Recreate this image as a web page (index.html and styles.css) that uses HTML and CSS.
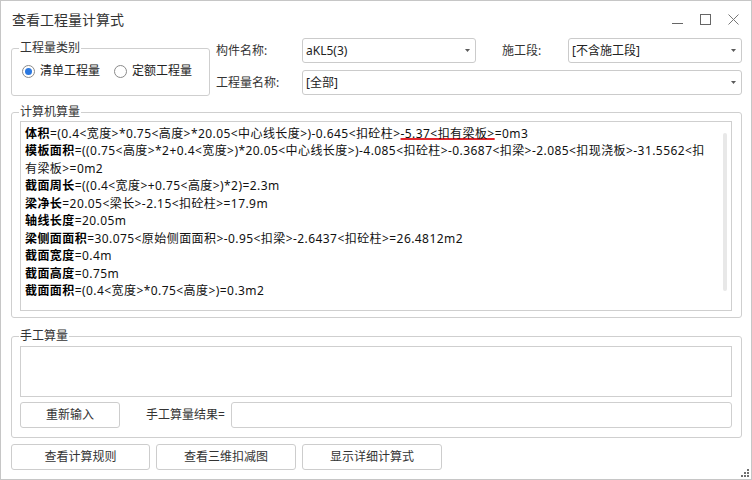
FILE: index.html
```html
<!DOCTYPE html>
<html lang="zh-CN">
<head>
<meta charset="utf-8">
<title>查看工程量计算式</title>
<link rel="stylesheet" href="styles.css">
</head>
<body>
<div class="window">
  <div class="titlebar">
    <span class="title">查看工程量计算式</span>
    <div class="controls">
      <svg viewBox="0 0 11 11"><line x1="0" y1="9.5" x2="11" y2="9.5" stroke="#666" stroke-width="1"/></svg>
      <svg viewBox="0 0 11 11"><rect x="0.5" y="0.5" width="10" height="10" fill="none" stroke="#666" stroke-width="1"/></svg>
      <svg viewBox="0 0 11 11"><path d="M0.5 0.5 L10.5 10.5 M10.5 0.5 L0.5 10.5" stroke="#777" stroke-width="1" fill="none"/></svg>
    </div>
  </div>
  <div class="content">
    <div class="top">
      <fieldset class="group type-group">
        <legend>工程量类别</legend>
        <div class="radios">
          <span class="radio-item"><span class="radio checked"><span class="dot"></span></span>清单工程量</span>
          <span class="radio-item second"><span class="radio"></span>定额工程量</span>
        </div>
      </fieldset>
      <div class="props">
        <span class="lbl">构件名称:</span>
        <div class="combo"><span>aKL5(3)</span><svg class="arrow" viewBox="0 0 5 3"><polygon points="0,0 5,0 2.5,3" fill="#5a5a5a"/></svg></div>
        <span class="lbl lbl-stage">施工段:</span>
        <div class="combo"><span>[不含施工段]</span><svg class="arrow" viewBox="0 0 5 3"><polygon points="0,0 5,0 2.5,3" fill="#5a5a5a"/></svg></div>
        <span class="lbl">工程量名称:</span>
        <div class="combo combo-wide"><span>[全部]</span><svg class="arrow" viewBox="0 0 5 3"><polygon points="0,0 5,0 2.5,3" fill="#5a5a5a"/></svg></div>
      </div>
    </div>

    <fieldset class="group calc-group">
      <legend>计算机算量</legend>
      <div class="calc-body">
        <div class="calc-box">
          <div class="calc-text">
            <p><b>体积</b>=(0.4&lt;宽度&gt;*0.75&lt;高度&gt;*20.05&lt;中心线长度&gt;)-0.645&lt;扣砼柱&gt;<span class="spell">-5.37&lt;扣有梁板&gt;</span>=0m3</p>
            <p><b>模板面积</b>=((0.75&lt;高度&gt;*2+0.4&lt;宽度&gt;)*20.05&lt;中心线长度&gt;)-4.085&lt;扣砼柱&gt;-0.3687&lt;扣梁&gt;-2.085&lt;扣现浇板&gt;-31.5562&lt;扣有梁板&gt;=0m2</p>
            <p><b>截面周长</b>=((0.4&lt;宽度&gt;+0.75&lt;高度&gt;)*2)=2.3m</p>
            <p><b>梁净长</b>=20.05&lt;梁长&gt;-2.15&lt;扣砼柱&gt;=17.9m</p>
            <p><b>轴线长度</b>=20.05m</p>
            <p><b>梁侧面面积</b>=30.075&lt;原始侧面面积&gt;-0.95&lt;扣梁&gt;-2.6437&lt;扣砼柱&gt;=26.4812m2</p>
            <p><b>截面宽度</b>=0.4m</p>
            <p><b>截面高度</b>=0.75m</p>
            <p><b>截面面积</b>=(0.4&lt;宽度&gt;*0.75&lt;高度&gt;)=0.3m2</p>
          </div>
          <div class="scrollbar"></div>
        </div>
      </div>
    </fieldset>

    <fieldset class="group manual-group">
      <legend>手工算量</legend>
      <div class="manual-body">
        <div class="manual-input"></div>
        <div class="manual-row">
          <button class="btn btn-reinput">重新输入</button>
          <span class="lbl result-lbl">手工算量结果=</span>
          <div class="result-input"></div>
        </div>
      </div>
    </fieldset>

    <div class="footer">
      <button class="btn">查看计算规则</button>
      <button class="btn">查看三维扣减图</button>
      <button class="btn">显示详细计算式</button>
    </div>
  </div>
  <svg class="grip" viewBox="0 0 8 8">
    <rect x="6" y="0" width="2" height="2" fill="#707070"/>
    <rect x="3" y="3" width="2" height="2" fill="#707070"/>
    <rect x="6" y="3" width="2" height="2" fill="#707070"/>
    <rect x="0" y="6" width="2" height="2" fill="#707070"/>
    <rect x="3" y="6" width="2" height="2" fill="#707070"/>
    <rect x="6" y="6" width="2" height="2" fill="#707070"/>
  </svg>
</div>
</body>
</html>
```

FILE: styles.css
```css
* { box-sizing: border-box; }
html, body { margin: 0; padding: 0; background: #fff; }
body {
  font-family: "Noto Sans", "Noto Sans CJK SC", sans-serif;
  font-size: 12px;
  color: #333;
}
.window {
  position: relative;
  width: 752px;
  height: 480px;
  border: 1px solid #c6c6c6;
  background: #fff;
  display: flex;
  flex-direction: column;
}
.titlebar {
  height: 37px;
  flex: none;
  display: flex;
  align-items: center;
  justify-content: space-between;
  padding: 0 12px 0 11px;
}
.title { font-size: 14px; line-height: 20px; color: #333; }
.controls { display: flex; align-items: center; gap: 17px; }
.controls svg { width: 11px; height: 11px; display: block; }

.content {
  padding: 0 9px 0 10px;
  display: flex;
  flex-direction: column;
}

.group {
  margin: 0;
  padding: 0;
  min-width: 0;
  border: 1px solid #cfcfcf;
  border-radius: 3px;
}
.group > legend {
  margin-left: 7px;
  padding: 0 1px;
  font-size: 12px;
  line-height: 16px;
  color: #333;
}

.top { display: flex; align-items: flex-start; gap: 6px; }
.type-group { width: 199px; margin-top: 2px; }
.radios {
  display: flex;
  align-items: center;
  padding: 7px 0 16px 10px;
  line-height: 16px;
  color: #222;
}
.radio-item { display: flex; align-items: center; gap: 5px; }
.radio-item.second { margin-left: 14px; }
.radio {
  width: 13px;
  height: 13px;
  border: 1px solid #8a8a8a;
  border-radius: 50%;
  display: flex;
  align-items: center;
  justify-content: center;
  background: #fff;
}
.radio .dot { width: 7px; height: 7px; border-radius: 50%; background: #2b78e0; }

.props {
  display: grid;
  grid-template-columns: 86px 174px 92px 174px;
  grid-template-rows: 25px 25px;
  row-gap: 7px;
}
.lbl { display: flex; align-items: center; line-height: 16px; color: #333; }
.lbl-stage { padding-left: 26px; }
.combo {
  display: flex;
  align-items: center;
  justify-content: space-between;
  border: 1px solid #cbcbcb;
  border-radius: 3px;
  padding: 0 5px 0 3px;
  color: #222;
  line-height: 16px;
}
.combo-wide { grid-column: 2 / 5; }
.arrow { width: 5px; height: 3px; display: block; }

.calc-group { margin-top: 8px; }
.calc-body { padding: 1px 9px 6px 8px; }
.calc-box {
  height: 190px;
  border: 1px solid #cfcfcf;
  display: flex;
}
.calc-text {
  flex: 1;
  padding: 3px 12px 0 4px;
  font-size: 12px;
  line-height: 17.45px;
  letter-spacing: 0.43px;
  color: #111;
}
.calc-text p { margin: 0; }
.calc-text b { font-weight: 700; color: #000; }
.spell {
  text-decoration-line: underline;
  text-decoration-color: #e3262d;
  text-decoration-thickness: 2px;
  text-underline-offset: 0px;
}
.scrollbar {
  width: 4px;
  margin: 11px 4px 19px 0;
  background: #e8e8e8;
  border-radius: 2px;
}

.manual-group { margin-top: 10px; }
.manual-body { padding: 2px 9px 9px 8px; }
.manual-input { height: 51px; border: 1px solid #cfcfcf; }
.manual-row { display: flex; align-items: center; margin-top: 5px; height: 26px; }
.btn {
  height: 26px;
  padding: 0;
  border: 1px solid #cdcdcd;
  border-radius: 3px;
  background: #fff;
  font-family: inherit;
  font-size: 12px;
  line-height: 16px;
  color: #333;
}
.btn-reinput { width: 100px; }
.result-lbl { margin-left: 26px; }
.result-input {
  flex: 1;
  height: 26px;
  margin-left: 6px;
  border: 1px solid #cfcfcf;
  border-radius: 3px;
}

.footer { display: flex; gap: 6px; margin-top: 6px; }
.footer .btn { width: 140px; }
.footer .btn:first-child { width: 139px; }

.grip {
  position: absolute;
  right: 2px;
  bottom: 2px;
  width: 8px;
  height: 8px;
}
```
